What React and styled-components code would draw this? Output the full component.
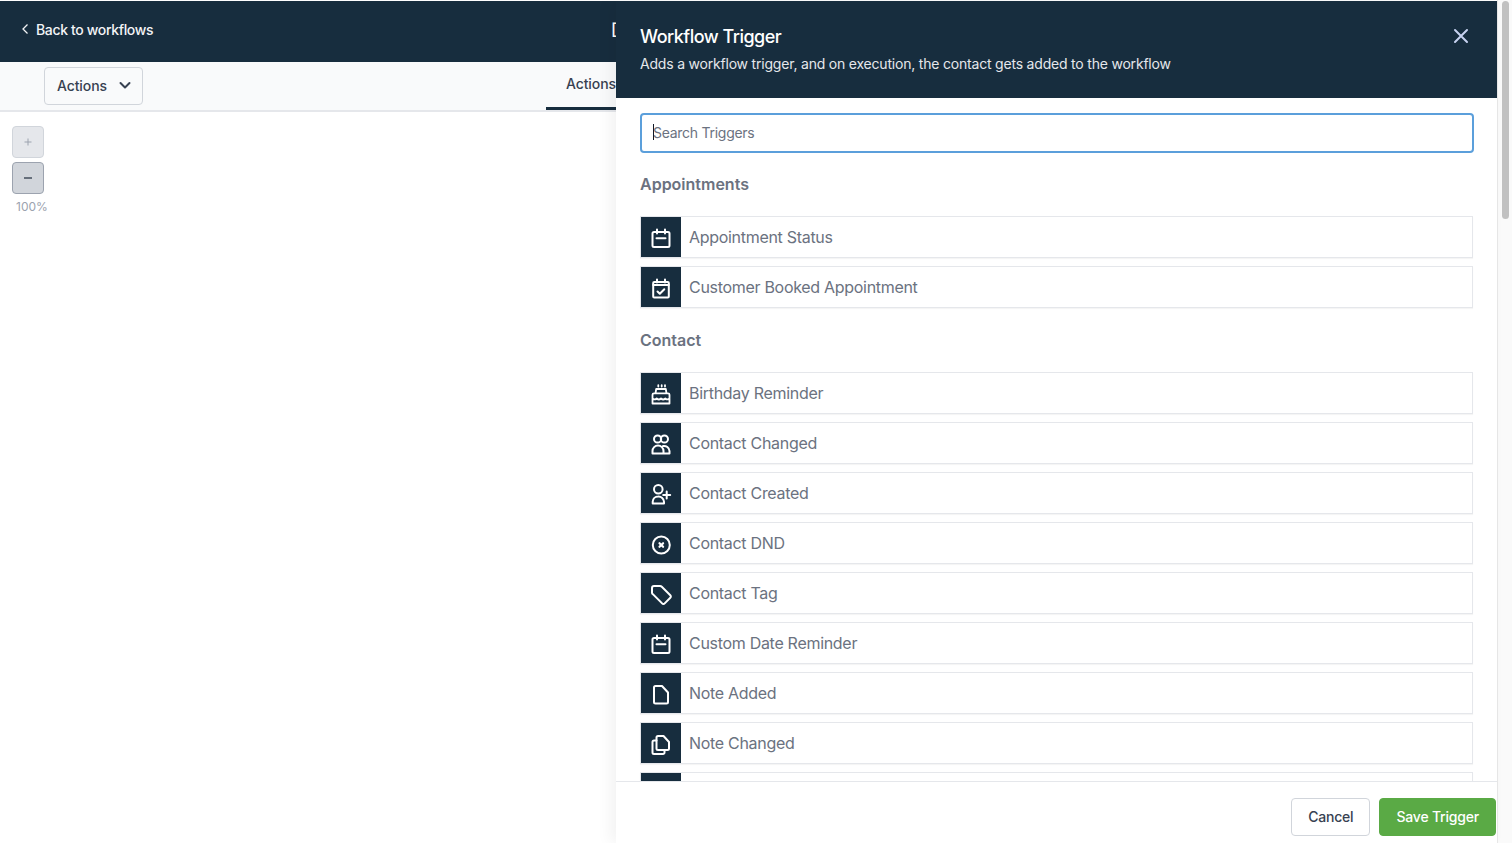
import React from 'react';
import styled, { createGlobalStyle } from 'styled-components';

const Global = createGlobalStyle`
  html, body { margin: 0; padding: 0; height: 100%; overflow: hidden; background: #fff; }
  * { box-sizing: border-box; }
  body { font-family: Inter, "Noto Sans", "Liberation Sans", sans-serif; -webkit-font-smoothing: antialiased; }
`;

const navy = '#172d3e';

const Page = styled.div`display: flex; width: 1512px; height: 843px; overflow: hidden;`;
const Main = styled.div`position: relative; flex: 1; min-width: 0; padding-top: 1px; display: flex; flex-direction: column;`;
const Scrollbar = styled.div`width: 15px; padding: 1px 3px 0 4px; background: #fafafa; border-left: 1px solid #e8e8e8;`;
const Thumb = styled.div`height: 218px; border-radius: 4px; background: #c1c1c1;`;

const TopBar = styled.header`height: 61px; flex: none; background: ${navy}; color: #fff; display: flex; align-items: center; justify-content: space-between; padding-left: 21px;`;
const BackLink = styled.a`display: flex; align-items: center; gap: 6px; font-size: 14px; letter-spacing: -0.35px; font-weight: 500; color: #f3f4f6; margin-top: -5px;`;
const WorkflowName = styled.div`font-size: 16px; font-weight: 500; margin: -5px 880px 0 0;`;

const SubBar = styled.div`height: 50px; flex: none; display: flex; justify-content: space-between; background: #f9fafb; border-bottom: 2px solid #e5e7eb; padding-left: 44px;`;
const ActionsButton = styled.button`height: 38px; width: 99px; margin-top: 5px; padding: 0 10px 2px 12px; display: flex; align-items: center; justify-content: space-between; font: 500 14px Inter, sans-serif; letter-spacing: -0.1px; color: #374151; background: #f9fafb; border: 1px solid #d1d5db; border-radius: 4px;`;
const Tabs = styled.nav`width: 951px; display: flex; height: 48px;`;
const Tab = styled.div`padding: 0 20px 3px; height: 48px; width: 100%; display: flex; align-items: center; font-size: 14px; font-weight: 500; letter-spacing: -0.1px; color: #374151; border-bottom: 3px solid ${navy}; margin-bottom: -2px;`;

const Canvas = styled.main`flex: 1; padding: 14px 12px; display: flex; flex-direction: column; align-items: flex-start;`;
const ZoomButton = styled.button`width: 32px; height: 32px; padding: 0; display: flex; align-items: center; justify-content: center; border-radius: 4px; border: 1px solid ${p => (p.$active ? '#9ca3af' : '#d1d5db')}; background: ${p => (p.$active ? '#d1d5db' : '#e5e7eb')}; color: ${p => (p.$active ? '#4b5563' : '#9ca3af')}; margin-bottom: 4px;`;
const ZoomLabel = styled.div`width: 40px; font-size: 12px; line-height: 16px; color: #9ca3af; margin-top: 1px; padding-left: 4px;`;

const Drawer = styled.aside`position: absolute; top: 1px; right: 0; bottom: 0; width: 881px; background: #fff; display: flex; flex-direction: column; box-shadow: -6px 0 14px rgba(0,0,0,.05);`;
const DrawerHead = styled.div`height: 97px; flex: none; background: ${navy}; display: flex; justify-content: space-between; padding: 24px 24px 0; color: #fff;`;
const DrawerTitle = styled.h2`margin: 0; font-size: 18px; line-height: 24px; letter-spacing: -0.5px; font-weight: 500; color: #fff;`;
const DrawerSub = styled.p`margin: 5px 0 0; font-size: 14px; line-height: 20px; letter-spacing: -0.2px; color: #e5e7eb;`;
const CloseButton = styled.button`width: 24px; height: 24px; margin-top: -1px; padding: 0; background: none; border: 0; color: #c7d2f0;`;
const DrawerBody = styled.div`flex: 1; min-height: 0; overflow: hidden; padding: 15px 24px 0;`;
const SearchWrap = styled.div`position: relative; width: 834px;`;
const SearchInput = styled.input`width: 100%; height: 40px; padding: 0 11px 2px; font: 400 14px Inter, sans-serif; letter-spacing: -0.27px; color: #374151; border: 2px solid #5b9fdb; border-radius: 4px; outline: none; background: #fff; &::placeholder { color: #6b7280; opacity: 1; }`;
const Caret = styled.span`position: absolute; left: 13px; top: 11px; width: 1px; height: 16px; background: #111827;`;
const SectionTitle = styled.h3`margin: 19px 0 20px; font-size: 16px; line-height: 24px; font-weight: 600; color: #6b7280;`;
const List = styled.div`display: flex; flex-direction: column; gap: 8px; width: 833px;`;
const Section = styled.section`& + & ${SectionTitle} { margin-top: 20px; }`;
const Row = styled.div`height: 42px; flex: none; display: flex; align-items: center; gap: 8px; background: #fff; border: 1px solid #e5e7eb; box-shadow: 0 1px 1px rgba(0,0,0,.04); font-size: 16px; letter-spacing: -0.3px; color: #6b7280;`;
const IconBox = styled.div`width: 40px; height: 40px; flex: none; display: flex; align-items: center; justify-content: center; background: ${navy}; color: #fff;`;
const Footer = styled.div`height: 62px; flex: none; border-top: 1px solid #e5e7eb; background: #fff; display: flex; justify-content: flex-end; gap: 9px; padding: 16px 1px 0 0;`;
const FootButton = styled.button`height: 38px; padding: 0 16px 2px; font: 500 14px Inter, sans-serif; letter-spacing: -0.2px; border-radius: 4px; border: 1px solid ${p => (p.$primary ? '#5aaa45' : '#d1d5db')}; background: ${p => (p.$primary ? '#5aaa45' : '#fff')}; color: ${p => (p.$primary ? '#fff' : '#374151')};`;

const Svg = ({ children, size = 24, sw = 2 }) => (
  <svg width={size} height={size} viewBox="0 0 24 24" fill="none" stroke="currentColor" strokeWidth={sw} strokeLinecap="round" strokeLinejoin="round">{children}</svg>
);

const Calendar = () => <Svg><rect x="3.500" y="7" width="17" height="15" rx="1.500" /><path d="M8 4.500v4M16 4.500v4M7.500 13.200h9" /></Svg>;
const CalendarCheck = () => <Svg><rect x="4.200" y="7" width="15.600" height="15.500" rx="1" /><path d="M8 4.500v3M16 4.500v3M4.200 10h15.600" /><path d="M8.500 16.500l2.300 2.300 4.500-4.500" /></Svg>;
const Cake = () => <Svg sw={1.800}><path d="M3.500 22.500h17v-8.700a1.500 1.500 0 0 0-1.500-1.500H5a1.500 1.500 0 0 0-1.500 1.500zM3.500 17.500c1.500 1.200 3 1.200 4.200 0 1.300 1.200 3 1.200 4.300 0 1.300 1.200 3 1.200 4.300 0 1.200 1.200 2.700 1.200 4.200 0M6.500 12.300l.7-4.300h9.600l.7 4.300" /><path d="M9.300 4.200v1.300M12.700 4.200v1.300M16 4.200v1.300" /></Svg>;
const Users = () => <Svg><circle cx="8.600" cy="8" r="3.600" /><circle cx="15.400" cy="8" r="3.600" /><path d="M3.500 22.500v-2.500a5.500 5.500 0 0 1 5.500-5.500 5.500 5.500 0 0 1 5.500 5.500v2.500zM14 15a5.500 5.500 0 0 1 6.500 5v2.500h-6" /></Svg>;
const UserPlus = () => <Svg><circle cx="9.300" cy="8.300" r="4.300" /><path d="M3.700 22.500v-1.700a5.500 5.500 0 0 1 5.500-5.300 5.500 5.500 0 0 1 5.800 5.300v1.700zM17.700 10.500v7M14.200 14h7" /></Svg>;
const CircleX = () => <Svg><circle cx="12.300" cy="14" r="8.500" /><path d="M10.500 12.200l3.600 3.600M14.100 12.200l-3.600 3.600" strokeWidth="2.200" /></Svg>;
const Tag = () => <Svg><path d="M3 7a2 2 0 0 1 2-2h6a2.500 2.500 0 0 1 1.800.7l8.500 8.500a1.800 1.800 0 0 1 0 2.600l-5.600 5.600a1.800 1.800 0 0 1-2.600 0l-9-9A2.500 2.500 0 0 1 3 12z" /></Svg>;
const Note = () => <Svg><path d="M6.500 22.500a1.500 1.500 0 0 1-1.500-1.500V6.500A1.500 1.500 0 0 1 6.500 5H13l6 6.500V21a1.500 1.500 0 0 1-1.500 1.500z" /></Svg>;
const Copy = () => <Svg><path d="M9 19a1.500 1.500 0 0 1-1.500-1.500v-11A1.500 1.500 0 0 1 9 5h5.500l5.500 6v6.500a1.500 1.500 0 0 1-1.500 1.500z" /><path d="M7.500 9.500H5A1.500 1.500 0 0 0 3.500 11v10.500A1.500 1.500 0 0 0 5 23h9a1.500 1.500 0 0 0 1.500-1.500V19" /></Svg>;

const sections = [
  { title: 'Appointments', items: [['Appointment Status', Calendar], ['Customer Booked Appointment', CalendarCheck]] },
  { title: 'Contact', items: [
    ['Birthday Reminder', Cake], ['Contact Changed', Users], ['Contact Created', UserPlus], ['Contact DND', CircleX],
    ['Contact Tag', Tag], ['Custom Date Reminder', Calendar], ['Note Added', Note], ['Note Changed', Copy], ['', Note],
  ] },
];

export default function App() {
  return (
    <Page>
      <Global />
      <Main>
        <TopBar>
          <BackLink>
            <svg width="9" height="12" viewBox="0 0 9 12" fill="none" stroke="currentColor" strokeWidth="1.300"><path d="M6.500 1.500L2 6l4.500 4.500" /></svg>
            Back to workflows
          </BackLink>
          <WorkflowName>[</WorkflowName>
        </TopBar>
        <SubBar>
          <ActionsButton>
            Actions
            <svg width="14" height="14" viewBox="0 0 14 14" fill="none" stroke="currentColor" strokeWidth="2" strokeLinecap="round" strokeLinejoin="round"><path d="M2.500 5L7 9.500 11.500 5" /></svg>
          </ActionsButton>
          <Tabs><Tab>Actions</Tab></Tabs>
        </SubBar>
        <Canvas>
          <ZoomButton aria-label="Zoom in">
            <svg width="10" height="10" viewBox="0 0 10 10" stroke="currentColor" strokeWidth="1"><path d="M5 1.500v7M1.500 5h7" /></svg>
          </ZoomButton>
          <ZoomButton $active aria-label="Zoom out">
            <svg width="10" height="10" viewBox="0 0 10 10" stroke="currentColor" strokeWidth="1.600"><path d="M1 5h8" /></svg>
          </ZoomButton>
          <ZoomLabel>100%</ZoomLabel>
        </Canvas>
        <Drawer>
          <DrawerHead>
            <div>
              <DrawerTitle>Workflow Trigger</DrawerTitle>
              <DrawerSub>Adds a workflow trigger, and on execution, the contact gets added to the workflow</DrawerSub>
            </div>
            <CloseButton aria-label="Close">
              <Svg><path d="M6 6l12 12M18 6L6 18" /></Svg>
            </CloseButton>
          </DrawerHead>
          <DrawerBody>
            <SearchWrap>
              <SearchInput placeholder="Search Triggers" readOnly />
              <Caret />
            </SearchWrap>
            {sections.map(s => (
              <Section key={s.title}>
                <SectionTitle>{s.title}</SectionTitle>
                <List>
                  {s.items.map(([label, Icon], i) => (
                    <Row key={i}>
                      <IconBox><Icon /></IconBox>
                      {label}
                    </Row>
                  ))}
                </List>
              </Section>
            ))}
          </DrawerBody>
          <Footer>
            <FootButton>Cancel</FootButton>
            <FootButton $primary>Save Trigger</FootButton>
          </Footer>
        </Drawer>
      </Main>
      <Scrollbar><Thumb /></Scrollbar>
    </Page>
  );
}
